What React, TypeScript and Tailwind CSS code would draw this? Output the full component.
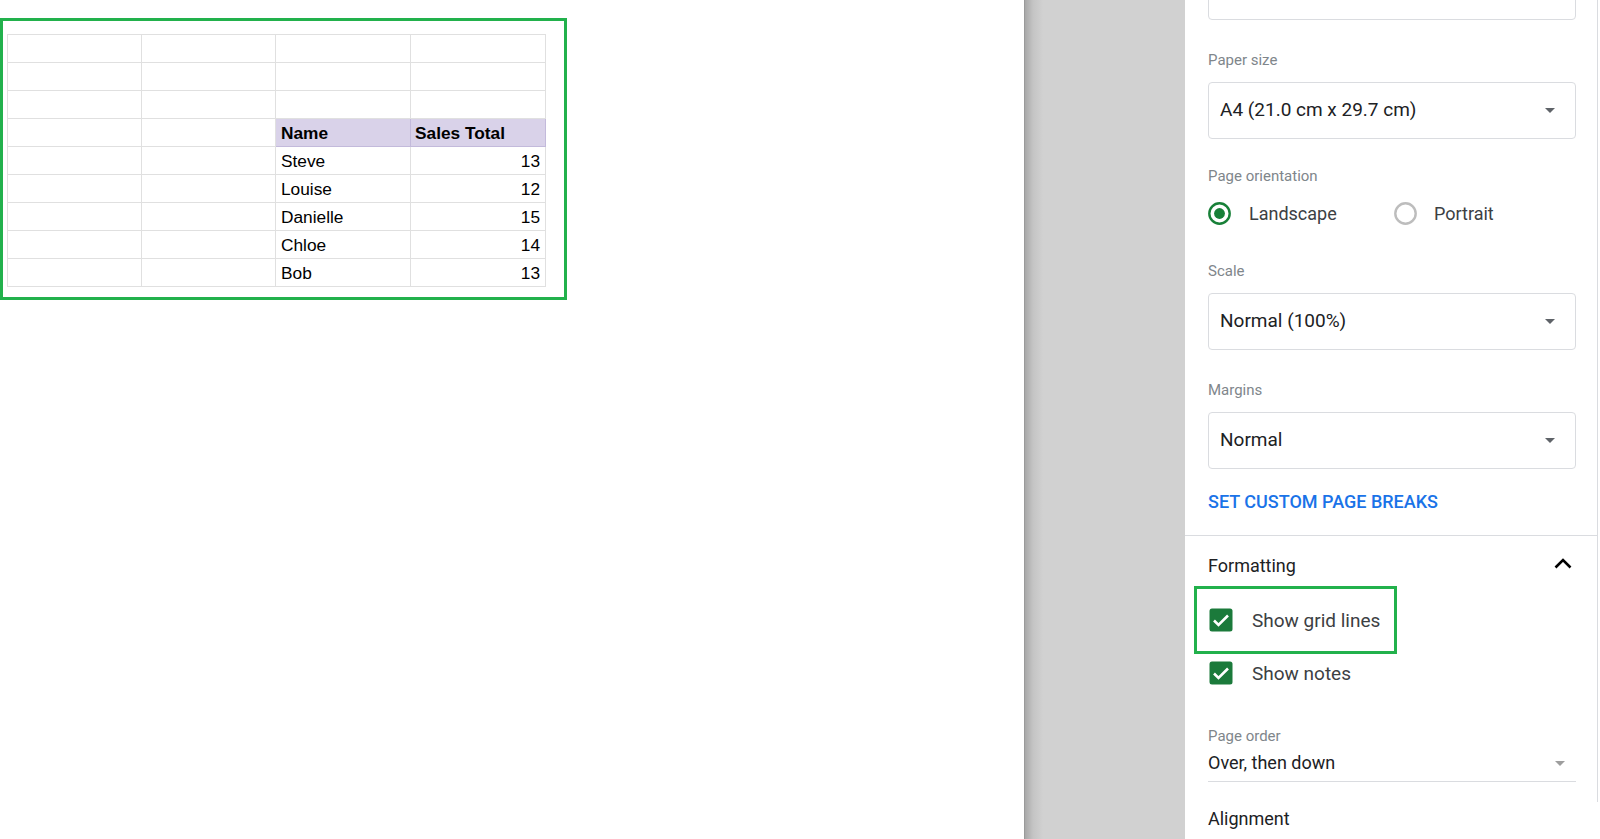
import { useState } from "react";

type Row = { name: string; total: number };

const rows: Array<Row> = [
    { name: "Steve", total: 13 },
    { name: "Louise", total: 12 },
    { name: "Danielle", total: 15 },
    { name: "Chloe", total: 14 },
    { name: "Bob", total: 13 },
];

function Caret({ color = "#5f6368" }: { color?: string }) {
    return (
        <svg width="10" height="5" viewBox="0 0 10 5">
            <polygon points="0,0 10,0 5,5" fill={color} />
        </svg>
    );
}

function Select({ value }: { value: string }) {
    return (
        <div className="mt-[12px] flex h-[57px] items-center justify-between rounded-[4px] border border-[#dadce0] pl-[11px] pr-[20px]">
            <span className="text-[19px] text-[#202124]">{value}</span>
            <Caret />
        </div>
    );
}

function Label({ text, className = "" }: { text: string; className?: string }) {
    return <div className={"h-[20px] text-[15px] leading-[20px] text-[#80868b] " + className}>{text}</div>;
}

function Radio({ checked }: { checked: boolean }) {
    return (
        <svg width="23" height="23" viewBox="0 0 23 23">
            <circle cx="11.5" cy="11.5" r="10.2" fill="none" stroke={checked ? "#188038" : "#bdbdbd"} strokeWidth="2.4" />
            {checked && <circle cx="11.5" cy="11.5" r="5.4" fill="#188038" />}
        </svg>
    );
}

function CheckBox() {
    return (
        <svg width="24" height="24" viewBox="0 0 24 24">
            <rect x="0.5" y="0.5" width="23" height="23" rx="2.5" fill="#1b7a3b" />
            <polyline points="5,12.5 9.5,17 19,7.5" fill="none" stroke="#fff" strokeWidth="2.6" />
        </svg>
    );
}

function SheetTable() {
    const cell = "h-[28px] w-[134px] border border-[#e0e0e0] p-0 leading-[20px]";
    const head = "h-[28px] w-[135px] border border-[#c3badb] bg-[#d9d2e9] pt-[1px] leading-[20px] font-bold";
    const empty = Array.from({ length: 3 });

    return (
        <table className="border-collapse text-[17.3px] text-black [font-family:'Liberation_Sans',Arial,sans-serif]">
            <tbody>
                {empty.map((_, i) => (
                    <tr key={i}>
                        <td className={cell}></td>
                        <td className={cell}></td>
                        <td className={cell}></td>
                        <td className={cell}></td>
                    </tr>
                ))}
                <tr>
                    <td className={cell}></td>
                    <td className={cell}></td>
                    <td className={head + " px-[5px]"}>Name</td>
                    <td className={head + " px-[4px]"}>Sales Total</td>
                </tr>
                {rows.map((r) => (
                    <tr key={r.name}>
                        <td className={cell}></td>
                        <td className={cell}></td>
                        <td className={cell + " px-[5px] pt-[1px]"}>{r.name}</td>
                        <td className={cell + " px-[5px] pt-[1px] text-right"}>{r.total}</td>
                    </tr>
                ))}
            </tbody>
        </table>
    );
}

export default function App() {
    const [orientation, setOrientation] = useState<"landscape" | "portrait">("landscape");

    return (
        <div className="flex h-[839px] w-[1600px] overflow-hidden bg-white [font-family:Roboto,'Noto_Sans',sans-serif]">
            {/* sheet preview */}
            <div className="w-[1024px] shrink-0 bg-white">
                <div className="mt-[18px] w-[567px] border-[3px] border-[#22b14c] pb-[10px] pl-[4px] pt-[13px]">
                    <SheetTable />
                </div>
            </div>

            {/* gray gutter */}
            <div className="w-[161px] shrink-0 border-l border-[#9a9a9a] bg-[linear-gradient(to_right,#a8a8a8,#c4c4c4_8px,#d1d1d1_18px)]" />

            {/* settings panel */}
            <div className="flex-1 bg-white pr-[2px]">
                <div className="h-full border-r border-[#dadce0]">
                    <div className="pb-[21px] pl-[23px] pr-[21px]">
                        <div className="-mt-[37px] h-[57px] rounded-[4px] border border-[#dadce0]" />

                        <Label text="Paper size" className="mt-[30px]" />
                        <Select value="A4 (21.0 cm x 29.7 cm)" />

                        <Label text="Page orientation" className="mt-[27px]" />
                        <div className="mt-[15px] flex h-[24px] items-center">
                            <button
                                className="flex w-[186px] items-center gap-[18px]"
                                onClick={() => setOrientation("landscape")}
                            >
                                <Radio checked={orientation === "landscape"} />
                                <span className="text-[18px] text-[#3c4043]">Landscape</span>
                            </button>
                            <button
                                className="flex items-center gap-[17px]"
                                onClick={() => setOrientation("portrait")}
                            >
                                <Radio checked={orientation === "portrait"} />
                                <span className="text-[18px] text-[#3c4043]">Portrait</span>
                            </button>
                        </div>

                        <Label text="Scale" className="mt-[36px]" />
                        <Select value="Normal (100%)" />

                        <Label text="Margins" className="mt-[30px]" />
                        <Select value="Normal" />

                        <div className="mt-[21px] h-[24px] text-[18px] font-medium leading-[24px] text-[#1a73e8]">
                            SET CUSTOM PAGE BREAKS
                        </div>
                    </div>

                    <div className="border-t border-[#dadce0] pl-[23px] pr-[21px]">
                        <div className="mt-[17px] flex h-[24px] items-center justify-between">
                            <span className="text-[18px] text-[#202124]">Formatting</span>
                            <svg width="18" height="11" viewBox="0 0 18 11" className="mr-[4px] -mt-[3px]">
                                <polyline points="1.5,9.5 9,2 16.5,9.5" fill="none" stroke="#000" strokeWidth="2.6" />
                            </svg>
                        </div>

                        <div className="relative mt-[31px] flex h-[24px] items-center gap-[19px] pl-[1px]">
                            <CheckBox />
                            <span className="pt-[2px] text-[19px] text-[#3c4043]">Show grid lines</span>
                            <div className="absolute -left-[14px] -top-[22px] h-[68px] w-[203px] border-[3px] border-[#22b14c]" />
                        </div>

                        <div className="mt-[29px] flex h-[24px] items-center gap-[19px] pl-[1px]">
                            <CheckBox />
                            <span className="pt-[2px] text-[19px] text-[#3c4043]">Show notes</span>
                        </div>

                        <Label text="Page order" className="mt-[41px]" />
                        <div className="mt-[5px] flex items-center justify-between border-b border-[#dadce0] pb-[6px] pr-[11px]">
                            <span className="h-[24px] text-[18px] leading-[24px] text-[#202124]">Over, then down</span>
                            <Caret color="#9e9e9e" />
                        </div>

                        <div className="mt-[25px] h-[24px] text-[18px] leading-[24px] text-[#202124]">Alignment</div>
                    </div>
                </div>
            </div>
        </div>
    );
}
